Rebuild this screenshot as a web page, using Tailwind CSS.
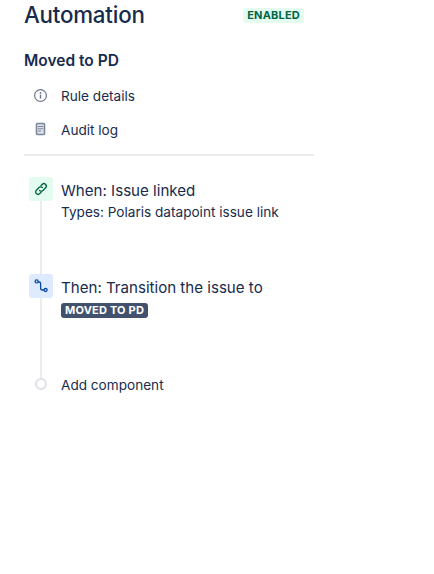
<!DOCTYPE html>
<html><head><meta charset="utf-8">
<script src="https://cdn.jsdelivr.net/npm/@tailwindcss/browser@4"></script>
</head>
<body class="bg-white font-['Inter',sans-serif] text-[#172b4d] overflow-hidden">
<div class="w-[290px] ml-6 h-[574px]">
  <div class="flex items-center justify-between h-[30px] pr-[10px]">
    <h1 class="text-[22.3px] leading-[30px] font-medium tracking-[-0.2px]">Automation</h1>
    <span class="h-[15px] px-[4px] rounded-[3px] bg-[#e3fcef] text-[#006644] text-[11px] leading-[15px] font-bold tracking-[0.2px]">ENABLED</span>
  </div>
  <h2 class="mt-[21px] text-[15.5px] leading-[20px] font-semibold">Moved to PD</h2>
  <div class="mt-[15px] pl-[9px] flex items-center gap-[13px] h-[20px] text-[13.6px]">
    <svg class="w-[15px] h-[15px] -translate-y-px" viewBox="0 0 15 15" fill="none"><circle cx="7.5" cy="7.5" r="5.9" stroke="#6b778c" stroke-width="1.2"/><rect x="6.8" y="6.6" width="1.4" height="4" fill="#6b778c"/><circle cx="7.5" cy="4.9" r="0.9" fill="#6b778c"/></svg>
    <span>Rule details</span>
  </div>
  <div class="mt-[14px] pl-[9px] flex items-center gap-[13px] h-[20px] text-[13.6px]">
    <svg class="w-[15px] h-[15px] -translate-y-px" viewBox="0 0 15 15" fill="none"><rect x="3.5" y="1.5" width="8" height="11" rx="1" stroke="#7a869a" stroke-width="1.6" fill="#dfe1e6"/><path d="M5 4.5h5M5 6.8h5M5 9h3" stroke="#7a869a" stroke-width="1.1"/></svg>
    <span>Audit log</span>
  </div>
  <div class="mt-[14px] h-[2px] bg-[#ebecf0]"></div>
  <div class="relative mt-[21px]">
    <div class="absolute left-[16px] top-[20px] w-[2px] h-[181px] bg-[#ebecf0]"></div>
    <div class="relative flex h-[97px]">
      <div class="ml-[5px] w-[24px] h-[24px] rounded-[3px] bg-[#e3fcef] flex items-center justify-center">
        <svg class="w-[16px] h-[16px]" viewBox="0 0 16 16" fill="none" stroke="#006644" stroke-width="1.35" stroke-linecap="round"><path d="M6.6 9.4a2.4 2.4 0 0 0 3.4 0l2.6-2.6a2.4 2.4 0 0 0-3.4-3.4L8 4.6"/><path d="M9.4 6.6a2.4 2.4 0 0 0-3.4 0L3.4 9.2a2.4 2.4 0 0 0 3.4 3.4L8 11.4"/></svg>
      </div>
      <div class="ml-[8px] pt-[2px]">
        <div class="text-[15.1px] leading-[24px]">When: Issue linked</div>
        <div class="text-[13.6px] leading-[20px] -mt-px">Types: Polaris datapoint issue link</div>
      </div>
    </div>
    <div class="relative flex h-[97px]">
      <div class="ml-[5px] w-[24px] h-[24px] rounded-[3px] bg-[#deebff] flex items-center justify-center">
        <svg class="w-[16px] h-[16px]" viewBox="0 0 16 16" fill="none" stroke="#0747a6" stroke-width="1.3"><circle cx="3.6" cy="3.4" r="1.5"/><circle cx="12.6" cy="12" r="1.5"/><path d="M5 4h1.2c1 0 1.4.6 1.4 1.5v4.5c0 1.2.6 2 1.8 2h1.7"/></svg>
      </div>
      <div class="ml-[8px] pt-[2px]">
        <div class="text-[15.1px] leading-[24px]">Then: Transition the issue to</div>
        <div class="mt-[3px] inline-block h-[15px] px-[4px] rounded-[3px] bg-[#42526e] text-white text-[11px] leading-[15px] font-bold tracking-[0.2px] align-top">MOVED TO PD</div>
      </div>
    </div>
    <div class="relative flex items-center h-[20px] mt-[3px]">
      <div class="ml-[11px] w-[12px] h-[12px] rounded-full border-2 border-[#dfe1e6] bg-white"></div>
      <span class="ml-[14px] pt-[2px] text-[13.6px]">Add component</span>
    </div>
  </div>
</div>
</body></html>
